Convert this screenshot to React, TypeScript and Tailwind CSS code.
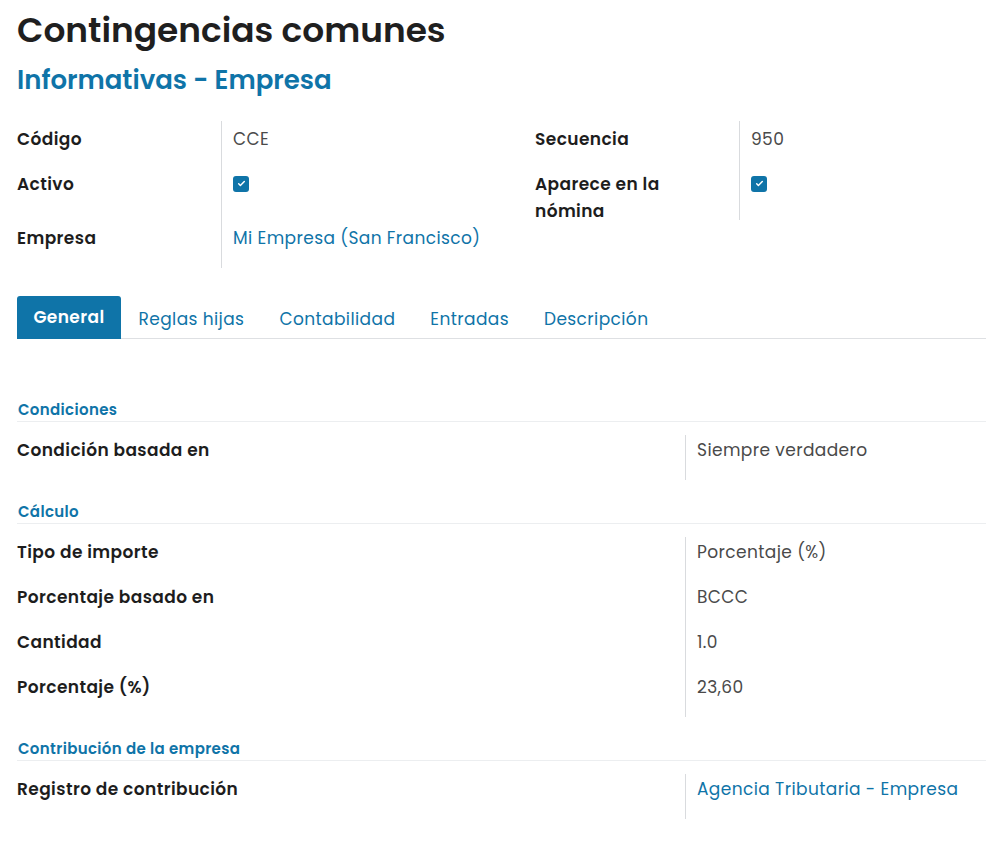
import React from "react";

const blue = "text-[#0f74a8]";

function Check() {
  return (
    <span className="inline-flex h-4 w-4 items-center justify-center rounded-[3px] bg-[#0f74a8]">
      <svg viewBox="0 0 16 16" className="h-[9px] w-[9px]" fill="none" stroke="white" strokeWidth="2.6" strokeLinecap="round" strokeLinejoin="round">
        <path d="M3 8.5l3 3 7-7" />
      </svg>
    </span>
  );
}

function TopRow({ label, children, h }: { label: React.ReactNode; children: React.ReactNode; h: string }) {
  return (
    <div className={`flex ${h}`}>
      <div className="w-[204px] pt-[5px] font-semibold leading-[27px] text-[#1d1d1d]">{label}</div>
      <div className="flex-1 border-l border-[#d9dbde] pl-[11px] pt-[5px] leading-[27px] text-[#4a4a4a]">{children}</div>
    </div>
  );
}

function Section({ title, rows }: { title: string; rows: { label: string; value: React.ReactNode }[] }) {
  return (
    <div>
      <div className={`border-b border-[#eceef0] pb-[1px] pl-[1px] text-[15px] font-semibold leading-[20px] tracking-[0.35px] ${blue}`}>{title}</div>
      <div className="mt-[13px] flex">
        <div className="w-[668px]">
          {rows.map((r) => (
            <div key={r.label} className="h-[45px] pt-[3px] font-semibold leading-[24px] text-[#1d1d1d]">{r.label}</div>
          ))}
        </div>
        <div className="flex-1 border-l border-[#d9dbde] pl-[11px]">
          {rows.map((r) => (
            <div key={r.label} className="h-[45px] pt-[3px] leading-[24px] text-[#4a4a4a]">{r.value}</div>
          ))}
        </div>
      </div>
    </div>
  );
}

export default function App() {
  const tabs = ["Reglas hijas", "Contabilidad", "Entradas", "Descripción"];
  return (
    <div className="min-h-[845px] w-[986px] overflow-hidden bg-white pl-[17px] text-[17px] tracking-[0.4px] font-['Poppins','Open_Sans',sans-serif]">
      <h1 className="pt-[8px] text-[34.4px] font-semibold leading-[44px] tracking-normal text-[#1f1f1f]">Contingencias comunes</h1>
      <h2 className={`mt-[13px] text-[26px] font-semibold leading-[30px] tracking-normal ${blue}`}>Informativas - Empresa</h2>

      <div className="mt-[26px] flex">
        <div className="w-[518px]">
          <TopRow label="Código" h="h-[45px]">CCE</TopRow>
          <TopRow label="Activo" h="h-[54px]">
            <span className="-mt-[2px] block"><Check /></span>
          </TopRow>
          <TopRow label="Empresa" h="h-[48px]">
            <span className={blue}>Mi Empresa (San Francisco)</span>
          </TopRow>
        </div>
        <div className="w-[451px]">
          <TopRow label="Secuencia" h="h-[45px]">950</TopRow>
          <TopRow label={<span>Aparece en la<br />nómina</span>} h="h-[54px]">
            <span className="-mt-[2px] block"><Check /></span>
          </TopRow>
        </div>
      </div>

      <div className="mt-[28px] flex border-b border-[#dee0e3]">
        <div className="-mb-px flex h-[43px] w-[104px] items-center justify-center rounded-t-[3px] bg-[#0f74a8] font-semibold text-white">General</div>
        <div className="flex items-center">
          {tabs.map((t) => (
            <div key={t} className={`px-[17.5px] pt-[5px] ${blue}`}>{t}</div>
          ))}
        </div>
      </div>

      <div className="mt-[61px] flex flex-col gap-[22px]">
        <Section title="Condiciones" rows={[{ label: "Condición basada en", value: "Siempre verdadero" }]} />
        <Section
          title="Cálculo"
          rows={[
            { label: "Tipo de importe", value: "Porcentaje (%)" },
            { label: "Porcentaje basado en", value: "BCCC" },
            { label: "Cantidad", value: "1.0" },
            { label: "Porcentaje (%)", value: "23,60" },
          ]}
        />
        <Section
          title="Contribución de la empresa"
          rows={[{ label: "Registro de contribución", value: <span className={blue}>Agencia Tributaria - Empresa</span> }]}
        />
      </div>
    </div>
  );
}
